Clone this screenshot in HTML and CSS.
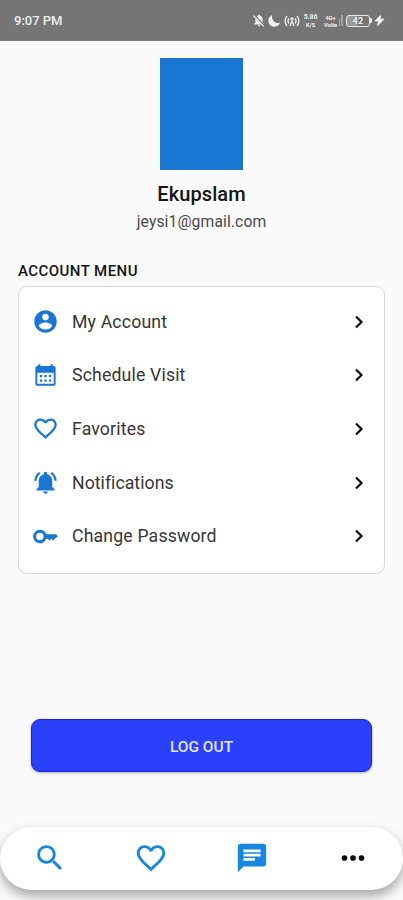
FILE: index.html
```html
<!DOCTYPE html>
<html lang="en">
<head>
<meta charset="utf-8">
<meta name="viewport" content="width=device-width">
<title>Account</title>
<link rel="stylesheet" href="styles.css">
</head>
<body>
<header class="status">
  <span class="time">9:07 PM</span>
  <div class="indicators">
    <svg width="12" height="13" viewBox="0 0 12 13"><path d="M6 .8c.7 0 1 .4 1 1 1.700.5 2.600 1.900 2.600 3.700V8.500l1.200 1.300v.7H1.200v-.7l1.200-1.300v-3C2.400 3.700 3.300 2.300 5 1.800c0-.6.3-1 1-1zM4.800 11.200h2.400q-.2 1.200-1.200 1.200t-1.200-1.200z"/><path d="M.8 1.200 11.500 12.300" stroke="#757575" stroke-width="2.400"/><path d="M.5 1.700 10.800 12.400" stroke="#f2f2f2" stroke-width="1.200"/></svg>
    <svg width="13" height="13" viewBox="0 0 13 13"><path d="M4.300 1A6 6 0 1 0 12 8.700 6.100 6.100 0 0 1 4.300 1z"/></svg>
    <svg class="line" width="16" height="14" viewBox="0 0 16 14"><path d="M3 2Q-.8 7 3 12M13 2q3.800 5 0 10M5 4.500q-2 2.500 0 5M11 4.500q2 2.500 0 5M8 7l-2 5M8 7l2 5"/><circle cx="8" cy="5" r="1"/></svg>
    <span class="tiny rate"><b class="speed">5.86</b><b>K/S</b></span>
    <span class="tiny"><b>4G+</b><b>Volte</b></span>
    <svg class="bars" width="4" height="13" viewBox="0 0 4 13"><path d="M0 5h1v7H0zM2 1h2v11H2z"/></svg>
    <span class="battery">42</span>
    <svg class="tip" width="2" height="5" viewBox="0 0 2 5"><path d="M0 0h1l1 1v3L1 5H0z"/></svg>
    <svg width="11" height="13" viewBox="0 0 12 13"><path stroke="#f2f2f2" d="M7 1 1 7h4l-1 5 7-7H7z"/></svg>
  </div>
</header>
<main>
  <section class="profile">
    <div class="avatar"></div>
    <h1>Ekupslam</h1>
    <p>jeysi1@gmail.com</p>
  </section>
  <h2>ACCOUNT MENU</h2>
  <nav class="menu">
    <a class="row">
      <svg class="icon" viewBox="0 0 24 24"><path d="M12 2C6.480 2 2 6.480 2 12s4.480 10 10 10 10-4.480 10-10S17.520 2 12 2m0 3c1.660 0 3 1.340 3 3s-1.340 3-3 3-3-1.340-3-3 1.340-3 3-3m0 14.200c-2.500 0-4.710-1.280-6-3.220.03-1.990 4-3.080 6-3.080s5.970 1.090 6 3.080c-1.290 1.940-3.500 3.220-6 3.220"/></svg>
      <span>My Account</span>
      <svg class="chevron" viewBox="0 0 10 14"><path d="m2 1.500 5.500 5.500L2 12.500"/></svg>
    </a>
    <a class="row">
      <svg class="icon" viewBox="0 0 24 24"><path fill-rule="evenodd" d="M19.500 3.500H18.500V2h-2v1.500h-9V2h-2v1.500H4.500A1.500 1.500 0 0 0 3 5V19.500A1.500 1.500 0 0 0 4.500 21h15a1.500 1.500 0 0 0 1.500-1.500V5a1.500 1.500 0 0 0-1.500-1.500M19.300 19.300H4.700V9.500h14.600zM7 11.500h2v2H7zm4 0h2v2h-2zm4 0h2v2h-2zm-8 4h2v2H7zm4 0h2v2h-2zm4 0h2v2h-2z"/></svg>
      <span>Schedule Visit</span>
      <svg class="chevron" viewBox="0 0 10 14"><path d="m2 1.500 5.500 5.500L2 12.500"/></svg>
    </a>
    <a class="row">
      <svg class="icon" viewBox="0 0 24 24"><path d="M16.500 3c-1.740 0-3.410.81-4.500 2.090C10.910 3.810 9.240 3 7.500 3 4.420 3 2 5.420 2 8.500c0 3.780 3.400 6.860 8.550 11.540L12 21.350l1.450-1.320C18.600 15.360 22 12.280 22 8.500 22 5.420 19.580 3 16.500 3m-4.400 15.550-.1.100-.1-.1C7.140 14.240 4 11.390 4 8.500 4 6.500 5.500 5 7.500 5c1.540 0 3.040.99 3.570 2.360h1.870C13.460 5.990 14.960 5 16.500 5c2 0 3.500 1.500 3.500 3.500 0 2.890-3.140 5.740-7.900 10.050"/></svg>
      <span>Favorites</span>
      <svg class="chevron" viewBox="0 0 10 14"><path d="m2 1.500 5.500 5.500L2 12.500"/></svg>
    </a>
    <a class="row">
      <svg class="icon" viewBox="0 0 24 24"><path d="M7.580 4.080 6.150 2.650C3.750 4.480 2.170 7.300 2.030 10.500h2c.15-2.650 1.510-4.970 3.550-6.420m12.390 6.420h2c-.15-3.200-1.730-6.020-4.120-7.850l-1.420 1.430c2.020 1.450 3.390 3.770 3.540 6.420M18 11c0-3.070-1.640-5.640-4.500-6.320V4c0-.83-.67-1.500-1.500-1.500s-1.500.67-1.500 1.500v.68C7.630 5.360 6 7.920 6 11v5l-2 2v1h16v-1l-2-2zm-6 11c.14 0 .27-.01.400-.04.65-.14 1.180-.58 1.440-1.180.1-.24.150-.5.150-.78h-4c.010 1.100.9 2 2.010 2"/></svg>
      <span class="snug">Notifications</span>
      <svg class="chevron" viewBox="0 0 10 14"><path d="m2 1.500 5.500 5.500L2 12.500"/></svg>
    </a>
    <a class="row">
      <svg class="icon" viewBox="0 0 24 24"><path fill-rule="evenodd" d="M7 6a6 6 0 1 0 5.700 8H14l1.500 1.500L17 14l1.500 1.500L20.200 14l2.800-2-1.500-2h-8.800A6 6 0 0 0 7 6m0 2.700a3.300 3.300 0 1 1 0 6.600 3.300 3.300 0 0 1 0-6.600"/></svg>
      <span>Change Password</span>
      <svg class="chevron" viewBox="0 0 10 14"><path d="m2 1.500 5.500 5.500L2 12.500"/></svg>
    </a>
  </nav>
  <button class="logout">LOG OUT</button>
</main>
<nav class="tabs">
  <svg viewBox="0 0 24 24"><path d="M15.500 14h-.79l-.28-.27C15.410 12.590 16 11.110 16 9.500 16 5.910 13.090 3 9.500 3S3 5.910 3 9.500 5.910 16 9.500 16c1.610 0 3.090-.59 4.230-1.570l.27.28v.79l5 4.990L20.490 19zm-6 0C7.010 14 5 11.990 5 9.500S7.010 5 9.500 5 14 7.010 14 9.500 11.990 14 9.500 14"/></svg>
  <svg viewBox="0 0 24 24"><path d="M16.500 3c-1.740 0-3.410.81-4.500 2.090C10.910 3.810 9.240 3 7.500 3 4.420 3 2 5.420 2 8.500c0 3.780 3.400 6.860 8.550 11.540L12 21.350l1.450-1.320C18.600 15.360 22 12.280 22 8.500 22 5.420 19.580 3 16.500 3m-4.400 15.550-.1.100-.1-.1C7.140 14.240 4 11.390 4 8.500 4 6.500 5.500 5 7.500 5c1.540 0 3.040.99 3.570 2.360h1.870C13.460 5.990 14.960 5 16.500 5c2 0 3.500 1.500 3.500 3.500 0 2.890-3.140 5.740-7.900 10.050"/></svg>
  <svg viewBox="0 0 24 24"><path fill-rule="evenodd" d="M20 2H4c-1.100 0-1.990.9-1.990 2L2 22l4-4h14c1.100 0 2-.9 2-2V4c0-1.100-.9-2-2-2M6 9h12v2H6zm8 5H6v-2h8zm4-6H6V6h12z"/></svg>
  <svg class="more" viewBox="0 0 24 24"><circle cx="6" cy="12" r="2"/><circle cx="12" cy="12" r="2"/><circle cx="18" cy="12" r="2"/></svg>
</nav>
</body>
</html>
```
FILE: styles.css
```css
* { box-sizing: border-box; }

body {
  margin: 0;
  height: 900px;
  overflow: hidden;
  display: flex;
  flex-direction: column;
  background: #fafafa;
  color: #151515;
  font-family: Roboto, "Liberation Sans", sans-serif;
}

.status {
  height: 41px;
  flex: none;
  display: flex;
  justify-content: space-between;
  align-items: center;
  padding: 0 18px 0 14px;
  background: #757575;
  color: #eee;
}
.time { font-size: 13px; font-weight: 500; }
.indicators { display: flex; align-items: center; }
.indicators svg { display: block; fill: #f2f2f2; margin-right: 3px; }
.indicators svg:last-child { margin-right: 0; }
.indicators .line { stroke: #f2f2f2; stroke-width: 1.300; fill: none; }
.indicators .bars { opacity: .4; margin-right: 3px; }
.indicators .tip { margin-right: 2px; }
.tiny {
  display: flex;
  flex-direction: column;
  align-items: center;
  width: 15px;
  margin-right: 1px;
  font-size: 6px;
  line-height: 7px;
  letter-spacing: -.1px;
}
.rate { margin-right: 5px; }
.speed { font-size: 7px; }
.battery {
  width: 24px;
  height: 12px;
  border: 1px solid #e8e8e8;
  border-radius: 3px;
  background: linear-gradient(90deg, #999 45%, transparent 45%);
  font-size: 9px;
  font-weight: 700;
  line-height: 10px;
  text-align: center;
}

main { flex: 1; padding: 17px 18px 0; }
.profile { display: flex; flex-direction: column; align-items: center; }
.avatar { width: 83px; height: 112px; background: #1976d2; }
h1 { margin: 12px 0 0; font-size: 20px; line-height: 24px; font-weight: 500; letter-spacing: .1px; }
.profile p {
  margin: 7px 0 0;
  font-size: 15.700px;
  line-height: 18px;
  color: #484848;
  letter-spacing: .1px;
}
h2 {
  margin: 32px 0 0;
  font-size: 15px;
  line-height: 16px;
  font-weight: 500;
  letter-spacing: .45px;
}

.menu {
  height: 288px;
  margin-top: 7px;
  padding: 8px 20px 0 13px;
  border: 1px solid #d8d8d8;
  border-radius: 9px;
  background: #fff;
}
.row {
  height: 53.600px;
  display: flex;
  align-items: center;
  font-size: 17.700px;
  color: #363636;
  letter-spacing: .15px;
}
.row span { flex: 1; margin-left: 13px; }
.row .snug { letter-spacing: .03px; }
.icon { width: 27px; height: 27px; fill: #1976d2; }
.chevron { width: 10px; height: 14px; fill: none; stroke: #111; stroke-width: 2.200; }

.logout {
  display: block;
  width: 341px;
  height: 53px;
  margin: 145px 0 0 13px;
  padding: 2px 0 0;
  border: 1px solid #1b22e6;
  border-radius: 9px;
  background: #2a40fa;
  box-shadow: 0 1px 3px rgba(0, 0, 0, .3);
  color: #e4e7ff;
  font: 500 15.500px Roboto, "Liberation Sans", sans-serif;
}

.tabs {
  flex: none;
  height: 63px;
  margin-bottom: 10px;
  padding-bottom: 2px;
  display: grid;
  grid-template-columns: repeat(4, 101px);
  justify-content: center;
  align-items: center;
  justify-items: center;
  border-radius: 32px;
  background: #fff;
  box-shadow: 0 6px 12px rgba(0, 0, 0, .34);
}
.tabs svg { width: 34px; height: 34px; fill: #1688e0; }
.tabs .more { fill: #050505; }
```
